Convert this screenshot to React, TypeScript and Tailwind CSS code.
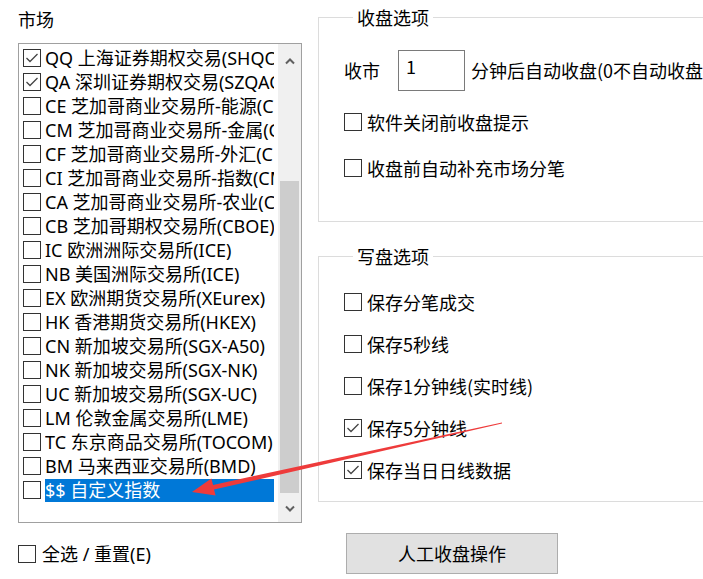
import React from "react";

type Market = { code: string; name: string; checked?: boolean; selected?: boolean };

const markets: Market[] = [
  { code: "QQ", name: "上海证券期权交易(SHQOP)", checked: true },
  { code: "QA", name: "深圳证券期权交易(SZQAOP)", checked: true },
  { code: "CE", name: "芝加哥商业交易所-能源(CME)" },
  { code: "CM", name: "芝加哥商业交易所-金属(CME)" },
  { code: "CF", name: "芝加哥商业交易所-外汇(CME)" },
  { code: "CI", name: "芝加哥商业交易所-指数(CME)" },
  { code: "CA", name: "芝加哥商业交易所-农业(CME)" },
  { code: "CB", name: "芝加哥期权交易所(CBOE)" },
  { code: "IC", name: "欧洲洲际交易所(ICE)" },
  { code: "NB", name: "美国洲际交易所(ICE)" },
  { code: "EX", name: "欧洲期货交易所(XEurex)" },
  { code: "HK", name: "香港期货交易所(HKEX)" },
  { code: "CN", name: "新加坡交易所(SGX-A50)" },
  { code: "NK", name: "新加坡交易所(SGX-NK)" },
  { code: "UC", name: "新加坡交易所(SGX-UC)" },
  { code: "LM", name: "伦敦金属交易所(LME)" },
  { code: "TC", name: "东京商品交易所(TOCOM)" },
  { code: "BM", name: "马来西亚交易所(BMD)" },
  { code: "$$", name: "自定义指数", selected: true },
];

const CheckBox = ({ checked }: { checked?: boolean }) => (
  <span className="w-[18px] h-[18px] shrink-0 border border-[#333333] bg-white flex items-center justify-center">
    {checked && (
      <svg width="14" height="14" viewBox="0 0 14 14">
        <polyline points="1.5,7 5,10.5 12.5,3" fill="none" stroke="#444" strokeWidth="1.3" />
      </svg>
    )}
  </span>
);

const Option = ({ label, checked }: { label: string; checked?: boolean }) => (
  <div className="flex items-center h-[24px]">
    <CheckBox checked={checked} />
    <span className="ml-[5px] whitespace-nowrap">{label}</span>
  </div>
);

const Chevron = ({ down }: { down?: boolean }) => (
  <svg width="10" height="7" viewBox="0 0 10 7">
    <polyline
      points={down ? "1,1.5 5,5.5 9,1.5" : "1,5.5 5,1.5 9,5.5"}
      fill="none"
      stroke="#606060"
      strokeWidth="2"
    />
  </svg>
);

export default function App() {
  return (
    <div className="relative w-[703px] h-[579px] overflow-hidden bg-white text-black flex font-['Noto_Sans_CJK_SC',sans-serif]">
      {/* left: market list */}
      <div className="ml-[18px] w-[284px] shrink-0 flex flex-col">
        <div className="mt-[7px] h-[24px] leading-[24px] text-[18px]">市场</div>
        <div className="mt-[12px] h-[480px] border border-[#a0a0a0] flex">
          <div className="flex-1 min-w-0 pt-[2px] pl-[4px] pr-[4px] overflow-hidden text-[18px] font-['Noto_Sans','Noto_Sans_CJK_SC',sans-serif]">
            {markets.map((m) => (
              <div key={m.code} className="flex items-center h-[24px]">
                <CheckBox checked={m.checked} />
                <span
                  className={
                    m.selected
                      ? "ml-[4px] flex-1 min-w-0 h-[23px] leading-[23px] whitespace-nowrap overflow-hidden bg-[#0078d7] text-white"
                      : "ml-[4px] flex-1 min-w-0 leading-[24px] whitespace-nowrap overflow-hidden"
                  }
                >
                  {m.code} {m.name}
                </span>
              </div>
            ))}
          </div>
          <div className="w-[23px] shrink-0 bg-[#f0f0f0] flex flex-col">
            <div className="h-[28px] flex items-center justify-center pt-[6px]">
              <Chevron />
            </div>
            <div className="flex-1">
              <div className="mt-[109px] mx-[2px] h-[312px] bg-[#cdcdcd]" />
            </div>
            <div className="h-[28px] flex items-center justify-center">
              <Chevron down />
            </div>
          </div>
        </div>
        <div className="mt-[19px] flex items-center h-[24px] text-[18px] font-['Noto_Sans','Noto_Sans_CJK_SC',sans-serif]">
          <CheckBox />
          <span className="ml-[6px] whitespace-nowrap">全选 / 重置(E)</span>
        </div>
      </div>

      {/* right: options */}
      <div className="ml-[16px] w-[420px] shrink-0 flex flex-col text-[18px]">
        <fieldset className="mt-[5px] h-[217px] border border-[#dcdcdc] pl-[25px]">
          <legend className="ml-[9px] px-[4px] leading-[24px]">收盘选项</legend>
          <div className="mt-[21px] flex items-center">
            <span>收市</span>
            <div className="ml-[18px] w-[67px] h-[41px] border border-[#7a7a7a] pl-[7px] pt-[3px] leading-[24px]">1</div>
            <span className="ml-[6px] whitespace-nowrap">分钟后自动收盘(0不自动收盘)</span>
          </div>
          <div className="mt-[19px]">
            <Option label="软件关闭前收盘提示" />
          </div>
          <div className="mt-[22px]">
            <Option label="收盘前自动补充市场分笔" />
          </div>
        </fieldset>

        <fieldset className="mt-[22px] h-[258px] border border-[#dcdcdc] pl-[25px]">
          <legend className="ml-[9px] px-[4px] leading-[24px]">写盘选项</legend>
          <div className="mt-[22px] flex flex-col gap-[18px]">
            <Option label="保存分笔成交" />
            <Option label="保存5秒线" />
            <Option label="保存1分钟线(实时线)" />
            <Option label="保存5分钟线" checked />
            <Option label="保存当日日线数据" checked />
          </div>
        </fieldset>

        <button className="mt-[31px] ml-[28px] w-[212px] h-[41px] bg-[#e1e1e1] border border-[#adadad] text-[18px] flex items-center justify-center">
          人工收盘操作
        </button>
      </div>

      {/* annotation arrow drawn over the dialog */}
      <svg className="absolute inset-0 pointer-events-none" width="703" height="579" viewBox="0 0 703 579">
        <polygon
          points="502,422.4 213.1,484.9 211.3,478.6 192,492 215.6,495.6 214,489.6 502,423.6"
          fill="#ee3b3b"
        />
      </svg>
    </div>
  );
}
